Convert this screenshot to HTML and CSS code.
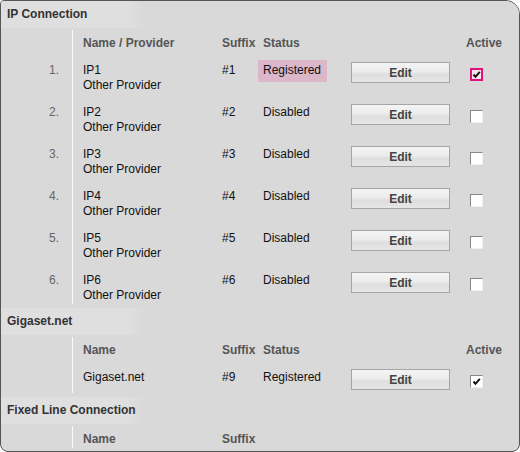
FILE: index.html
```html
<!DOCTYPE html>
<html lang="en">
<head>
  <meta charset="UTF-8" />
  <title>Connections</title>
  <link rel="stylesheet" href="styles.css">
</head>
<body>
  <div class="panel">
    <div class="sect-title">IP Connection</div>
    <div class="sect-body">
      <div class="row head">
        <div class="c-num"></div>
        <div class="c-name">Name / Provider</div>
        <div class="c-suffix">Suffix</div>
        <div class="c-status">Status</div>
        <div class="c-edit"></div>
        <div class="c-active">Active</div>
      </div>
      <div class="row">
        <div class="c-num">1.</div>
        <div class="c-name">IP1<br>Other Provider</div>
        <div class="c-suffix">#1</div>
        <div class="c-status"><span class="badge">Registered</span></div>
        <div class="c-edit"><button class="btn">Edit</button></div>
        <div class="c-active"><span class="chk checked focus"><svg viewBox="0 0 9 9"><path d="M1.5 4.5 L3.5 6.8 L7.8 1.8" /></svg></span></div>
      </div>
      <div class="row">
        <div class="c-num">2.</div>
        <div class="c-name">IP2<br>Other Provider</div>
        <div class="c-suffix">#2</div>
        <div class="c-status">Disabled</div>
        <div class="c-edit"><button class="btn">Edit</button></div>
        <div class="c-active"><span class="chk"></span></div>
      </div>
      <div class="row">
        <div class="c-num">3.</div>
        <div class="c-name">IP3<br>Other Provider</div>
        <div class="c-suffix">#3</div>
        <div class="c-status">Disabled</div>
        <div class="c-edit"><button class="btn">Edit</button></div>
        <div class="c-active"><span class="chk"></span></div>
      </div>
      <div class="row">
        <div class="c-num">4.</div>
        <div class="c-name">IP4<br>Other Provider</div>
        <div class="c-suffix">#4</div>
        <div class="c-status">Disabled</div>
        <div class="c-edit"><button class="btn">Edit</button></div>
        <div class="c-active"><span class="chk"></span></div>
      </div>
      <div class="row">
        <div class="c-num">5.</div>
        <div class="c-name">IP5<br>Other Provider</div>
        <div class="c-suffix">#5</div>
        <div class="c-status">Disabled</div>
        <div class="c-edit"><button class="btn">Edit</button></div>
        <div class="c-active"><span class="chk"></span></div>
      </div>
      <div class="row">
        <div class="c-num">6.</div>
        <div class="c-name">IP6<br>Other Provider</div>
        <div class="c-suffix">#6</div>
        <div class="c-status">Disabled</div>
        <div class="c-edit"><button class="btn">Edit</button></div>
        <div class="c-active"><span class="chk"></span></div>
      </div>
    </div>

    <div class="sect-title">Gigaset.net</div>
    <div class="sect-body">
      <div class="row head">
        <div class="c-num"></div>
        <div class="c-name">Name</div>
        <div class="c-suffix">Suffix</div>
        <div class="c-status">Status</div>
        <div class="c-edit"></div>
        <div class="c-active">Active</div>
      </div>
      <div class="row single">
        <div class="c-num"></div>
        <div class="c-name">Gigaset.net</div>
        <div class="c-suffix">#9</div>
        <div class="c-status">Registered</div>
        <div class="c-edit"><button class="btn">Edit</button></div>
        <div class="c-active"><span class="chk checked"><svg viewBox="0 0 9 9"><path d="M1.5 4.5 L3.5 6.8 L7.8 1.8" /></svg></span></div>
      </div>
    </div>

    <div class="sect-title">Fixed Line Connection</div>
    <div class="sect-body">
      <div class="row head">
        <div class="c-num"></div>
        <div class="c-name">Name</div>
        <div class="c-suffix">Suffix</div>
        <div class="c-status"></div>
        <div class="c-edit"></div>
        <div class="c-active"></div>
      </div>
    </div>
  </div>
</body>
</html>
```

FILE: styles.css
```css
body {
  margin: 0;
  font-family: "Liberation Sans", Arial, sans-serif;
  font-size: 12px;
  color: #111;
  background: #fff;
}
.panel {
  width: 520px;
  height: 452px;
  box-sizing: border-box;
  overflow: hidden;
  background: #d9d9d9;
  border: 1px solid #555;
  border-radius: 4px 14px 8px 8px;
}
.sect-title {
  height: 27px;
  line-height: 27px;
  padding-left: 6px;
  font-weight: bold;
  color: #333;
  background: linear-gradient(to right, #dfdfdf 0, #dfdfdf 125px, #d9d9d9 145px);
}
.sect-body {
  background: linear-gradient(#fafafa, #fafafa) 71px 2px / 1px calc(100% - 6px) no-repeat;
}
.row {
  display: grid;
  grid-template-columns: 71px 150px 41px 88px 115px 1fr;
  align-items: start;
  height: 42px;
  box-sizing: border-box;
  padding-top: 7px;
  line-height: 15px;
}
.row.head {
  height: 28px;
  padding-top: 8px;
  font-weight: bold;
  color: #555;
}
.row.single {
  height: 34px;
}
.c-num {
  text-align: right;
  padding-right: 13px;
  color: #666;
}
.c-name {
  padding-left: 11px;
}
.badge {
  display: inline-block;
  margin: -3px 0 0 -5px;
  padding: 3px 6px 4px 5px;
  background: #dcb6c9;
}
.btn {
  display: block;
  width: 99px;
  height: 21px;
  padding: 0;
  margin-top: -1px;
  border: 1px solid #a5a5a5;
  border-radius: 0;
  background: linear-gradient(#f4f4f4 0, #ececec 45%, #dedede 60%, #e6e6e6 100%);
  font-family: inherit;
  font-size: 12px;
  font-weight: bold;
  color: #444;
}
.chk {
  display: block;
  width: 13px;
  height: 13px;
  box-sizing: border-box;
  margin: 5px 0 0 4px;
  background: #fff;
  border: 1px solid;
  border-color: #888 #f0f0f0 #f0f0f0 #888;
}
.chk svg {
  display: block;
  width: 9px;
  height: 9px;
  margin: 1px;
  fill: none;
  stroke: #111;
  stroke-width: 2;
}
.chk.focus {
  border: 2px solid #e0137d;
  background: #fbe6f0;
}
.chk.focus svg {
  margin: 0;
}
```
